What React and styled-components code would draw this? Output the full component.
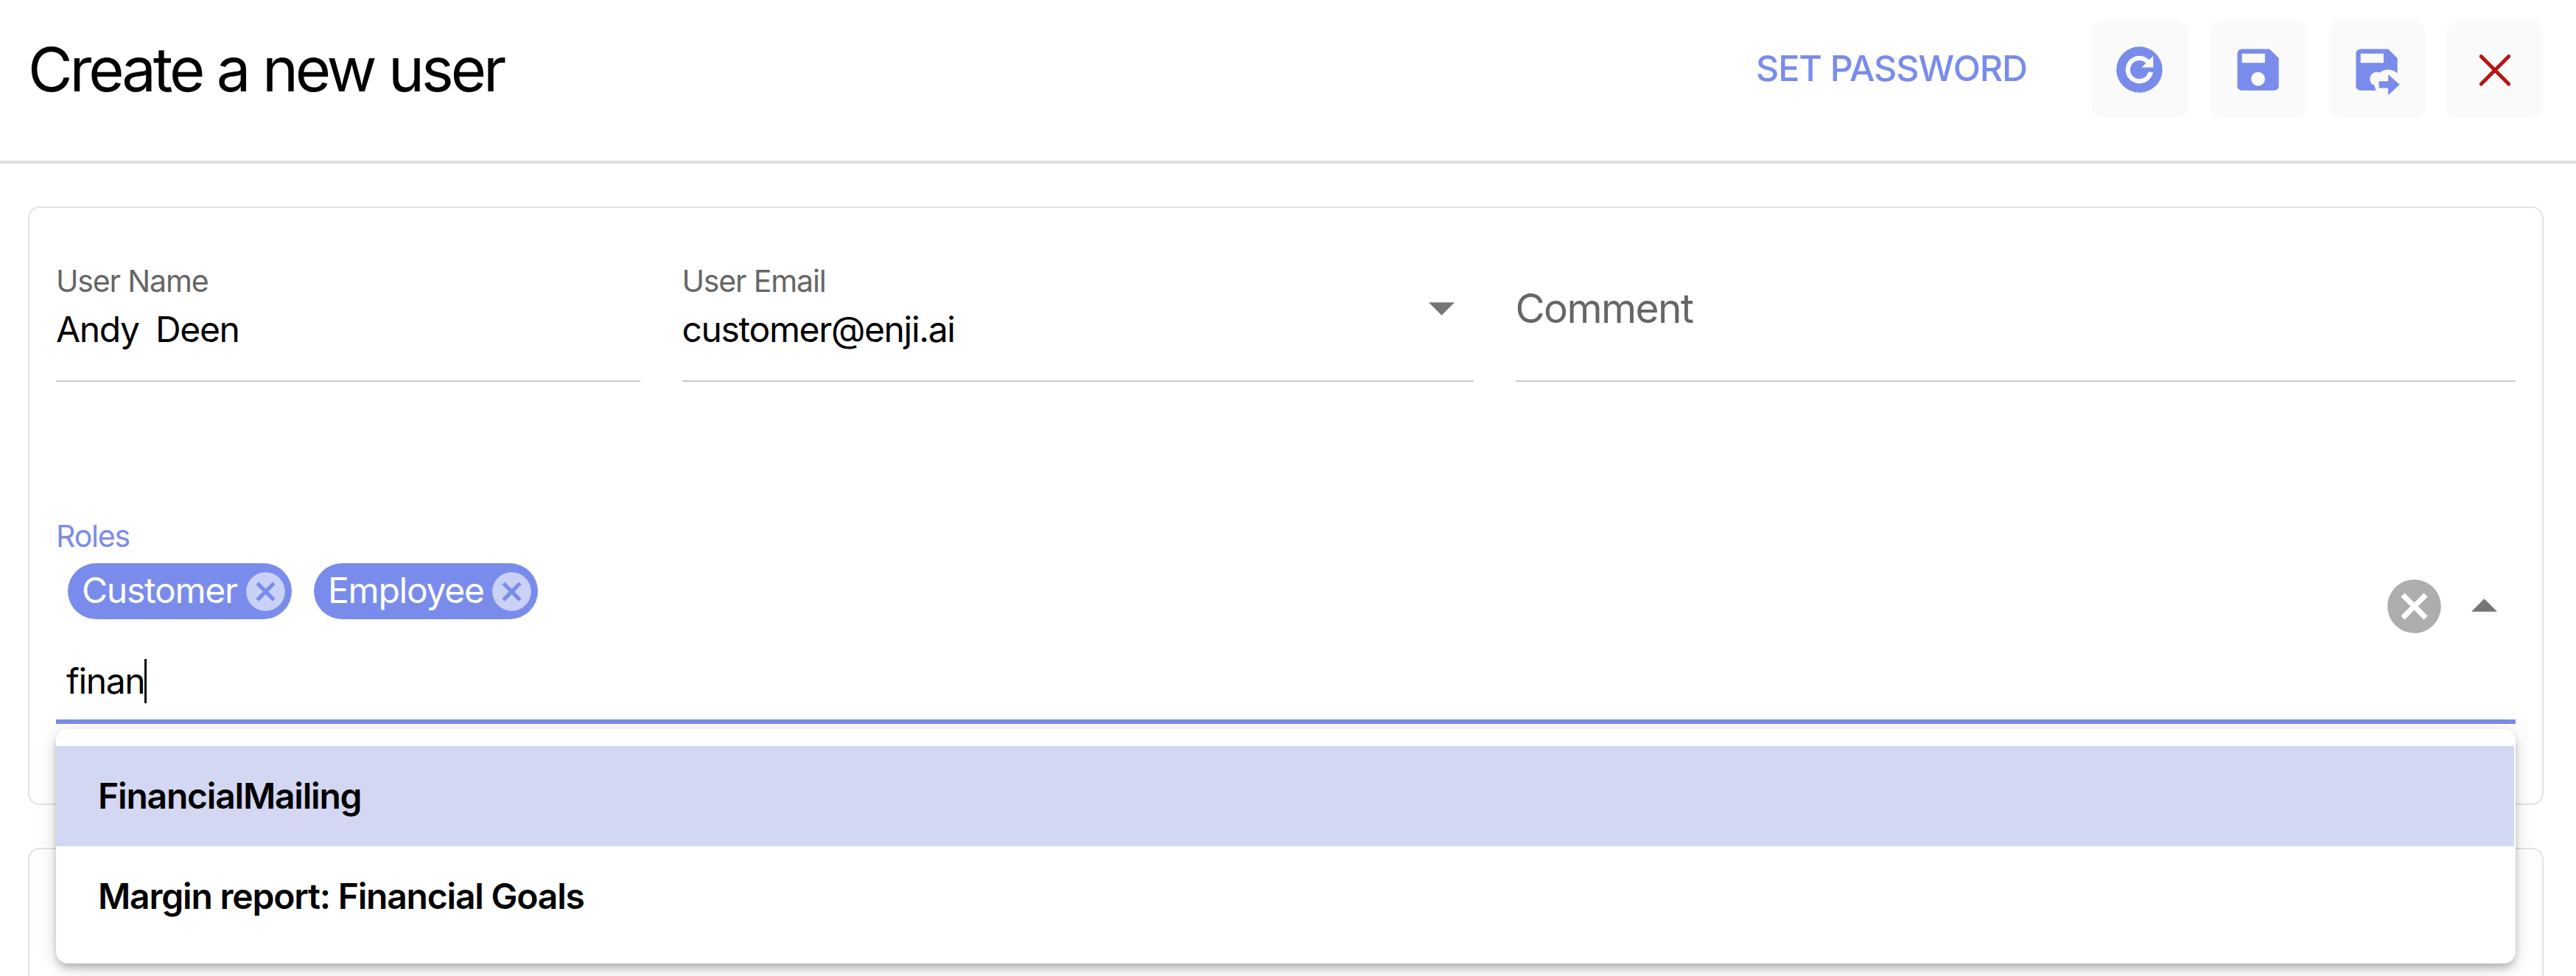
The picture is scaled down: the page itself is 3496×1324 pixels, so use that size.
import React, { useState } from "react";
import { createGlobalStyle, styled } from "styled-components";

const ICONS = {
  refresh:
    "M12 2A10 10 0 0 0 2 12A10 10 0 0 0 12 22A10 10 0 0 0 22 12A10 10 0 0 0 12 2M18 11H13L14.81 9.19A3.94 3.94 0 0 0 12 8A4 4 0 1 0 15.86 13H17.91A6 6 0 1 1 12 6A5.91 5.91 0 0 1 16.22 7.78L18 6V11Z",
  save: "M17 3H5c-1.11 0-2 .9-2 2v14c0 1.1.89 2 2 2h14c1.1 0 2-.9 2-2V7l-4-4zm-5 16c-1.66 0-3-1.34-3-3s1.34-3 3-3 3 1.34 3 3-1.34 3-3 3zm3-10H5V5h10v4z",
  saveMove:
    "M17 3H5C3.89 3 3 3.9 3 5V19C3 20.1 3.89 21 5 21H11.81C11.42 20.34 11.17 19.6 11.07 18.84C9.5 18.31 8.66 16.6 9.2 15.03C9.61 13.83 10.73 13 12 13C12.44 13 12.88 13.1 13.28 13.29C15.57 11.5 18.83 11.59 21 13.54V7L17 3M15 9H5V5H15V9M13 17H17V14L22 18.5L17 23V20H13V17",
  cancel:
    "M12 2C6.47 2 2 6.47 2 12s4.47 10 10 10 10-4.47 10-10S17.53 2 12 2zm5 13.59L15.59 17 12 13.41 8.41 17 7 15.59 10.59 12 7 8.41 8.41 7 12 10.59 15.59 7 17 8.41 13.41 12 17 15.59z",
};

const Icon = ({ name, size }) => (
  <svg width={size} height={size} viewBox="0 0 24 24" fill="currentColor">
    <path d={ICONS[name]} />
  </svg>
);

const options = ["FinancialMailing", "Margin report: Financial Goals"];

export const RolesField = () => {
  const [roles, setRoles] = useState(["Customer", "Employee"]);

  const removeRole = (it) => {
    setRoles(roles.filter((item) => item !== it));
  };

  return (
    <RolesWrapper>
      <Label $active>Roles</Label>
      <RolesRow>
        <RolesContent>
          <Chips>
            {roles.map((it) => (
              <Chip key={it}>
                <ChipLabel>{it}</ChipLabel>
                <ChipDelete onClick={() => removeRole(it)}>
                  <Icon name="cancel" size={63} />
                </ChipDelete>
              </Chip>
            ))}
          </Chips>
          <Query>
            finan
            <Caret />
          </Query>
        </RolesContent>
        <Controls>
          <ClearBtn onClick={() => setRoles([])}>
            <Icon name="cancel" size={87} />
          </ClearBtn>
          <OpenArrow viewBox="0 0 10 5">
            <path d="M0 5L5 0L10 5Z" />
          </OpenArrow>
        </Controls>
      </RolesRow>
      <Menu>
        {options.map((it, index) => (
          <Option key={it} $selected={index === 0}>
            {it}
          </Option>
        ))}
      </Menu>
    </RolesWrapper>
  );
};

const App = () => {
  return (
    <Page>
      <GlobalStyle />
      <Header>
        <Title>Create a new user</Title>
        <TextButton>SET PASSWORD</TextButton>
        <Actions>
          <IconButton>
            <Icon name="refresh" size={75} />
          </IconButton>
          <IconButton>
            <Icon name="save" size={75} />
          </IconButton>
          <IconButton>
            <Icon name="saveMove" size={75} />
          </IconButton>
          <IconButton $danger>
            <svg width="75" height="75" viewBox="0 0 75 75">
              <path
                d="M18.3 19.5L55.7 56.9M55.7 19.5L18.3 56.9"
                stroke="currentColor"
                strokeWidth="5"
                strokeLinecap="round"
              />
            </svg>
          </IconButton>
        </Actions>
      </Header>
      <Content>
        <Card $height="812px">
          <Fields>
            <Field>
              <div>
                <Label>User Name</Label>
                <Value>{"Andy  Deen"}</Value>
              </div>
            </Field>
            <Field>
              <div>
                <Label>User Email</Label>
                <Value>customer@enji.ai</Value>
              </div>
              <SelectArrow viewBox="0 0 10 5">
                <path d="M0 0L5 5L10 0Z" />
              </SelectArrow>
            </Field>
            <Field>
              <Placeholder>Comment</Placeholder>
            </Field>
          </Fields>
          <RolesField />
        </Card>
        <Card $height="400px" />
      </Content>
    </Page>
  );
};

export default App;

const GlobalStyle = createGlobalStyle`
  * {
    box-sizing: border-box;
  }
  body {
    margin: 0;
    background: #fff;
    font-family: Inter, "Liberation Sans", sans-serif;
  }
  button {
    border: none;
    padding: 0;
    background: none;
    font-family: inherit;
    color: inherit;
  }
  svg {
    display: block;
  }
`;

const Page = styled.div`
  height: 1324px;
  overflow: hidden;
  color: #000;
`;

const Header = styled.header`
  display: flex;
  align-items: flex-start;
  height: 222px;
  padding: 28px 44px 0 38px;
  border-bottom: 4px solid #dfdfdf;
`;

const Title = styled.h1`
  flex: 1;
  margin: 16px 0 0;
  font-size: 83px;
  line-height: 100px;
  font-weight: 400;
  letter-spacing: -4.15px;
  word-spacing: 0.5px;
`;

const TextButton = styled.button`
  margin: 36px 87px 0 0;
  font-size: 48.5px;
  font-weight: 500;
  line-height: 58px;
  letter-spacing: -1.1px;
  color: #7a8ceb;
`;

const Actions = styled.div`
  display: flex;
  gap: 29px;
`;

const IconButton = styled.button`
  display: flex;
  align-items: center;
  justify-content: center;
  width: 131.75px;
  height: 132px;
  border-radius: 16px;
  background: #fafafa;
  color: ${({ $danger }) => ($danger ? "#b81414" : "#7a8ceb")};
`;

const Content = styled.main`
  display: flex;
  flex-direction: column;
  gap: 58px;
  padding: 58px 44px 0 38px;
`;

const Card = styled.section`
  flex-shrink: 0;
  height: ${({ $height }) => $height};
  padding: 75px 36px 0;
  border: 2px solid #e3e3e3;
  border-radius: 16px;
`;

const Fields = styled.div`
  display: grid;
  grid-template-columns: 792.5px 1074px 1fr;
  gap: 57px;
  height: 161px;
`;

const Field = styled.div`
  display: flex;
  justify-content: space-between;
  align-items: flex-start;
  border-bottom: 2px solid #c9c9c9;
`;

const Label = styled.div`
  font-size: 41px;
  line-height: 48px;
  letter-spacing: -1.15px;
  color: ${({ $active }) => ($active ? "#7a8ceb" : "#666")};
`;

const Value = styled.div`
  margin-top: 13px;
  font-size: 48px;
  line-height: 58px;
  white-space: pre;
  letter-spacing: -1.35px;
  word-spacing: -1px;
`;

const Placeholder = styled.div`
  margin-top: 28px;
  font-size: 55px;
  line-height: 66px;
  letter-spacing: -1.6px;
  color: #666;
`;

const Arrow = styled.svg`
  width: 35px;
  height: 18px;
  fill: #757575;
`;

const SelectArrow = styled(Arrow)`
  margin: 53px 26px 0 0;
`;

const OpenArrow = styled(Arrow)`
  margin-bottom: 3px;
`;

const RolesWrapper = styled.div`
  position: relative;
  height: 279px;
  margin-top: 185px;
  border-bottom: 6px solid #7a8ceb;
`;

const RolesRow = styled.div`
  display: flex;
  justify-content: space-between;
  padding: 13px 25px 0 16px;
`;

const RolesContent = styled.div`
  display: flex;
  flex-direction: column;
  gap: 54px;
`;

const Chips = styled.div`
  display: flex;
  gap: 30px;
`;

const Chip = styled.div`
  display: flex;
  align-items: center;
  justify-content: space-between;
  width: 304px;
  height: 76px;
  padding: 0 4px 0 19px;
  border-radius: 38px;
  background: #7a8ceb;
  color: #fff;
`;

const ChipLabel = styled.span`
  padding-bottom: 3px;
  font-size: 48px;
  letter-spacing: -1.25px;
`;

const ChipDelete = styled.button`
  color: #cad1f7;
`;

const Query = styled.div`
  display: flex;
  align-items: center;
  height: 60px;
  margin-left: -2px;
  font-size: 48px;
  line-height: 60px;
  letter-spacing: -1.35px;
`;

const Caret = styled.span`
  width: 3px;
  height: 60px;
  background: #000;
`;

const Controls = styled.div`
  display: flex;
  align-items: center;
  gap: 34px;
  height: 87px;
  margin-top: 15px;
`;

const ClearBtn = styled.button`
  color: #adadad;
`;

const Menu = styled.div`
  position: absolute;
  top: 286px;
  left: 0;
  right: 0;
  padding: 23px 2px 23px 0;
  border-radius: 16px;
  background: #fff;
  box-shadow:
    0 6px 12px -3px rgba(0, 0, 0, 0.22),
    0 8px 14px rgba(0, 0, 0, 0.1),
    0 3px 30px rgba(0, 0, 0, 0.11);
`;

const Option = styled.div`
  height: 136px;
  padding-left: 57px;
  font-size: 48px;
  font-weight: 600;
  line-height: 136px;
  letter-spacing: -1.2px;
  background: ${({ $selected }) => ($selected ? "#d3d7f1" : "transparent")};
`;
